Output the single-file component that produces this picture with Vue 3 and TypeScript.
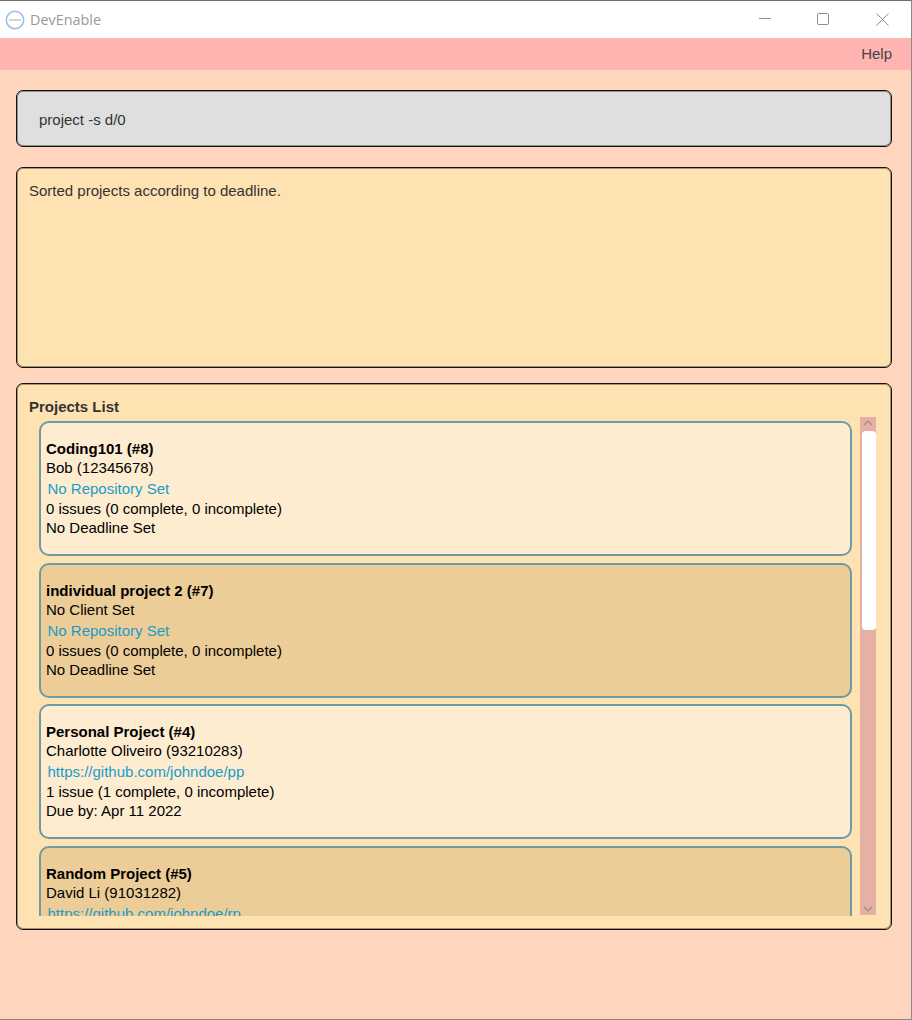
<script setup lang="ts">
interface Project {
  title: string
  client: string
  repo: string
  issues: string
  deadline: string
}

const projects: Project[] = [
  { title: 'Coding101 (#8)', client: 'Bob (12345678)', repo: 'No Repository Set', issues: '0 issues (0 complete, 0 incomplete)', deadline: 'No Deadline Set' },
  { title: 'individual project 2 (#7)', client: 'No Client Set', repo: 'No Repository Set', issues: '0 issues (0 complete, 0 incomplete)', deadline: 'No Deadline Set' },
  { title: 'Personal Project (#4)', client: 'Charlotte Oliveiro (93210283)', repo: 'https://github.com/johndoe/pp', issues: '1 issue (1 complete, 0 incomplete)', deadline: 'Due by: Apr 11 2022' },
  { title: 'Random Project (#5)', client: 'David Li (91031282)', repo: 'https://github.com/johndoe/rp', issues: '0 issues (0 complete, 0 incomplete)', deadline: 'No Deadline Set' },
]
</script>

<template>
  <div class="window">
    <header class="titlebar">
      <div class="app-name">
        <svg class="logo" width="20" height="20" viewBox="0 0 20 20" aria-hidden="true">
          <circle cx="10" cy="10" r="8.7" fill="#fff" stroke="#9dbde6" stroke-width="1.5" />
          <line x1="4" y1="10" x2="16" y2="10" stroke="#a5a5a5" stroke-width="1" />
        </svg>
        <span>DevEnable</span>
      </div>
      <div class="controls">
        <svg width="12" height="12" viewBox="0 0 12 12" aria-hidden="true">
          <line x1="0" y1="5.5" x2="12" y2="5.5" stroke="#8c8c8c" />
        </svg>
        <svg width="12" height="12" viewBox="0 0 12 12" aria-hidden="true">
          <rect x="0.5" y="0.5" width="11" height="11" rx="1" fill="none" stroke="#8c8c8c" />
        </svg>
        <svg class="close" width="13" height="13" viewBox="0 0 13 13" aria-hidden="true">
          <path d="M0.5 0.5 L12.5 12.5 M12.5 0.5 L0.5 12.5" fill="none" stroke="#8c8c8c" />
        </svg>
      </div>
    </header>

    <nav class="menubar"><span>Help</span></nav>

    <main class="content">
      <section class="box command">project -s d/0</section>
      <section class="box result">Sorted projects according to deadline.</section>
      <section class="box projects">
        <h2>Projects List</h2>
        <div class="list-wrap">
          <div class="list">
            <article
              v-for="(p, i) in projects"
              :key="p.title"
              class="card"
              :class="{ odd: i % 2 === 1 }"
            >
              <div class="name">{{ p.title }}</div>
              <div class="line">{{ p.client }}</div>
              <div class="repo">{{ p.repo }}</div>
              <div class="line">{{ p.issues }}</div>
              <div class="line">{{ p.deadline }}</div>
            </article>
          </div>
          <div class="scrollbar">
            <svg class="arrow" width="16" height="14" viewBox="0 0 16 14" aria-hidden="true">
              <path d="M4 8 L8 4 L12 8" fill="none" stroke="#998c8c" stroke-width="1.2" />
            </svg>
            <div class="thumb"></div>
            <svg class="arrow down" width="16" height="14" viewBox="0 0 16 14" aria-hidden="true">
              <path d="M4 6 L8 10 L12 6" fill="none" stroke="#998c8c" stroke-width="1.2" />
            </svg>
          </div>
        </div>
      </section>
    </main>
  </div>
</template>

<style scoped>
.window {
  box-sizing: border-box;
  width: 912px;
  height: 1020px;
  display: flex;
  flex-direction: column;
  background: #ffd5be;
  border-top: 1px solid #6f6f6f;
  border-right: 1px solid #8a8a8a;
  border-bottom: 1px solid #8a8a8a;
  font-family: "Liberation Sans", Arial, sans-serif;
  font-size: 15px;
  color: #333;
}

.titlebar {
  height: 37px;
  background: #fff;
  display: flex;
  align-items: center;
  justify-content: space-between;
}

.app-name {
  display: flex;
  align-items: center;
  gap: 5px;
  padding-left: 5px;
  font-family: "Open Sans", sans-serif;
  font-size: 14.4px;
  color: #9a9a9a;
}

.controls {
  display: flex;
  align-items: center;
  gap: 46px;
  padding: 0 22px 1px 0;
}

.close {
  margin-left: 1px;
}

.menubar {
  box-sizing: border-box;
  height: 32px;
  background: #ffb4b1;
  display: flex;
  align-items: center;
  justify-content: flex-end;
  padding: 0 19px 1px 0;
  color: #444;
}

.content {
  display: flex;
  flex-direction: column;
  padding: 20px 19px 0 16px;
}

.box {
  box-sizing: border-box;
  border: 1px solid #111;
  border-radius: 7px;
  box-shadow: inset 0 0 0 1px rgba(0, 0, 0, 0.35);
}

.command {
  height: 57px;
  padding: 2px 0 0 22px;
  display: flex;
  align-items: center;
  background: #dfdfdf;
}

.result {
  height: 201px;
  margin-top: 20px;
  padding: 14px 12px;
  background: #ffe2b2;
}

.projects {
  height: 547px;
  margin-top: 15px;
  padding: 14px 15px 0 12px;
  background: #ffe2b2;
}

h2 {
  margin: 0;
  font-size: 15px;
  line-height: 18px;
  font-weight: bold;
}

.list-wrap {
  display: flex;
  align-items: flex-start;
  margin-top: 1px;
  gap: 8px;
}

.list {
  flex: 1;
  height: 499px;
  overflow: hidden;
  padding: 4px 0 0 10px;
  box-sizing: border-box;
}

.card {
  box-sizing: border-box;
  height: 135px;
  margin-bottom: 6.7px;
  padding: 16px 5px 0;
  background: #fdecd0;
  border: 2px solid #6c9aa5;
  border-radius: 10px;
  color: #000;
  line-height: 19px;
}

.card.odd {
  background: #eccd98;
}

.name {
  font-weight: bold;
}

.repo {
  margin: 2px 0 1px 1.5px;
  color: #1a9cc9;
}

.scrollbar {
  width: 16px;
  height: 498px;
  flex: none;
  display: flex;
  flex-direction: column;
  align-items: flex-end;
  background: #e6b0a5;
}

.arrow {
  flex: none;
}

.thumb {
  width: 14px;
  height: 199px;
  background: #fff;
  border-radius: 4px;
}

.arrow.down {
  margin-top: auto;
}
</style>
